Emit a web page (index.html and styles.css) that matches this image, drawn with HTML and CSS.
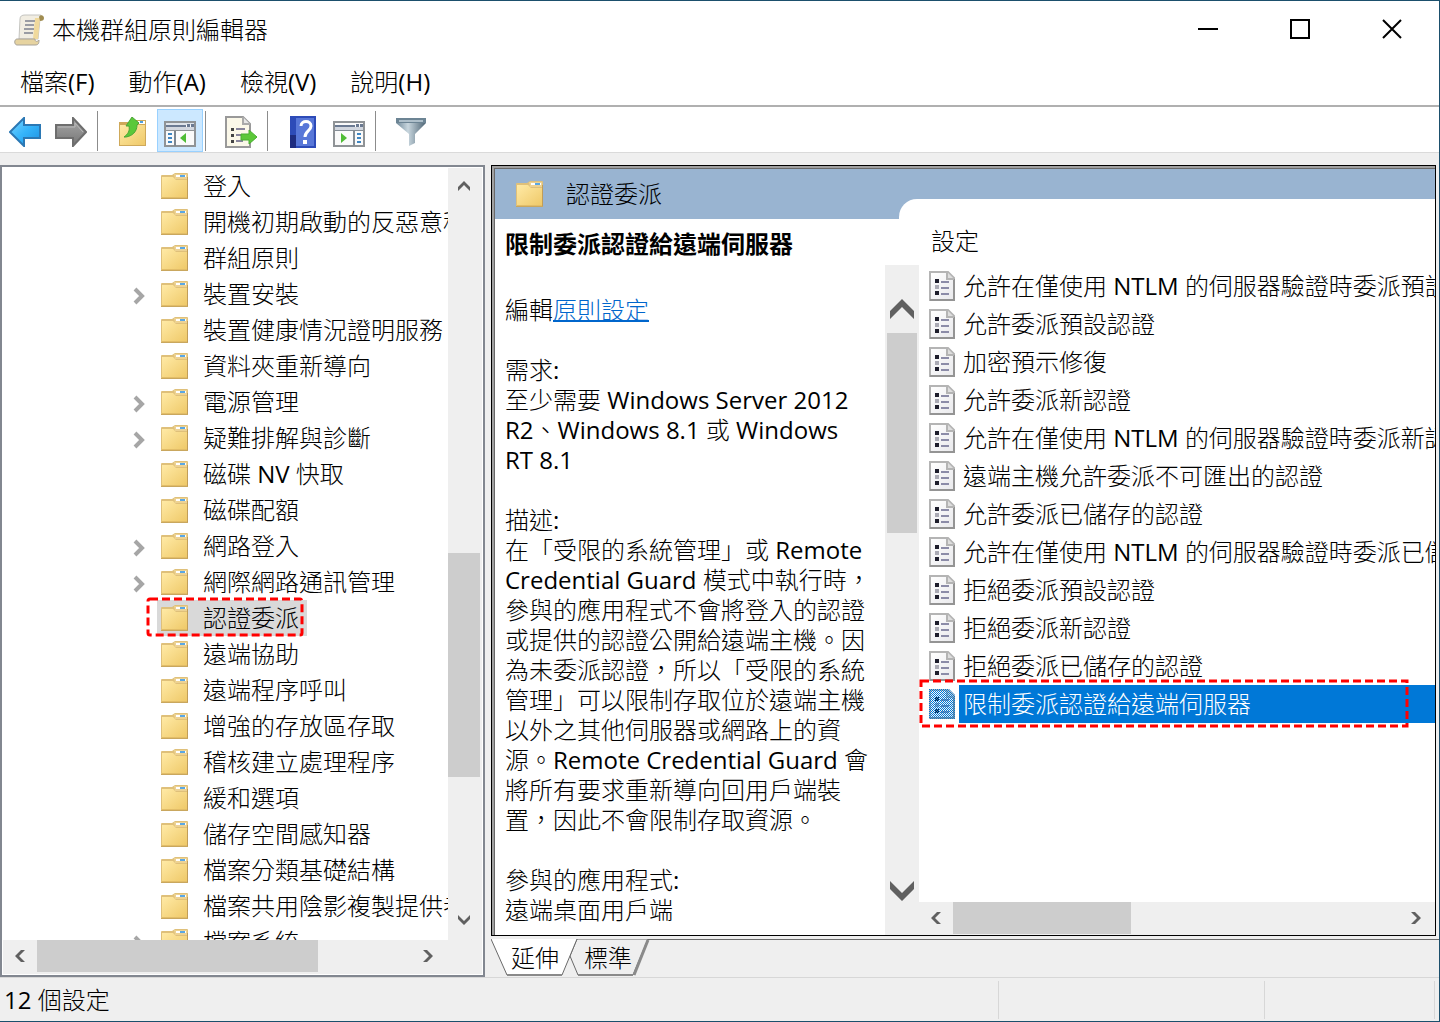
FILE: index.html
```html
<!DOCTYPE html>
<html lang="zh-Hant">

<head>
    <meta charset="UTF-8">
    <meta name="viewport" content="width=device-width, initial-scale=1.0">
    <title>本機群組原則編輯器</title>
    <link rel="stylesheet" href="styles.css">
</head>

<body>

    <!-- Shared icons -->
    <svg class="sprite" width="0" height="0" aria-hidden="true">
        <defs>
            <linearGradient id="gold" x1="0" y1="0" x2="1" y2="1">
                <stop offset="0" stop-color="#ffeaa6" />
                <stop offset="1" stop-color="#efc969" />
            </linearGradient>
            <linearGradient id="blue" x1="0" y1="0" x2="1" y2="1">
                <stop offset="0" stop-color="#7fd6ff" />
                <stop offset="0.5" stop-color="#35b4fa" />
                <stop offset="1" stop-color="#1c8fe0" />
            </linearGradient>
            <linearGradient id="gray" x1="0" y1="0" x2="0" y2="1">
                <stop offset="0" stop-color="#a9a9a9" />
                <stop offset="1" stop-color="#757575" />
            </linearGradient>
            <linearGradient id="steel" x1="0" y1="0" x2="1" y2="0">
                <stop offset="0" stop-color="#6e8798" />
                <stop offset="0.4" stop-color="#c8d6de" />
                <stop offset="1" stop-color="#4d6474" />
            </linearGradient>
            <linearGradient id="paper" x1="0" y1="0" x2="1" y2="1">
                <stop offset="0" stop-color="#ffffff" />
                <stop offset="1" stop-color="#e9e9ec" />
            </linearGradient>
            <pattern id="dither" width="2" height="2" patternUnits="userSpaceOnUse">
                <path d="M0 0h1v1H0zM1 1h1v1H1z" fill="#0078d7" />
            </pattern>
        </defs>
        <symbol id="folder" viewBox="0 0 30 28">
            <path d="M1 4q0-1 1-1h10l3-2h12q1 0 1 1v25H1z" fill="#dfc07a" />
            <path d="M14 2h13v5H15z" fill="#edd293" />
            <path d="M16 3h10v2H16z" fill="#fff" />
            <path d="M20 3h5v2h-5z" fill="#5aa7e4" />
            <path d="M2 5h11l3 3h11v17H2z" fill="url(#gold)" />
            <path d="M2 25h25v1H2z" fill="#e2bd68" />
            <path d="M1 26h27v1H1z" fill="#c9a75e" />
            <path d="M27 5h1v21h-1z" fill="#c19d58" />
        </symbol>
        <symbol id="policy" viewBox="0 0 26 30">
            <path d="M1 1h18l6 6v22H1z" fill="url(#paper)" stroke="#b4b4b4" stroke-width="2" />
            <path d="M25 8v21H1" fill="none" stroke="#949494" stroke-width="2" />
            <path d="M18 1v7h7" fill="#ddd" stroke="#b4b4b4" stroke-width="2" />
            <path d="M6 8h4v4H6zM6 20h4v4H6z" fill="#1d1d2b" />
            <path d="M6 14h4v4H6z" fill="#aaaab4" />
            <path d="M12 10h8v2h-8zM12 16h8v2h-8zM12 22h8v2h-8z" fill="#8c8ca8" />
        </symbol>
        <symbol id="arrow" viewBox="0 0 12 12">
            <path d="M0 7 6 1 12 7V11L6 5 0 11z" fill="#606060" />
        </symbol>
        <symbol id="expand" viewBox="0 0 12 18">
            <path d="M2 2 9 9 2 16" fill="none" stroke="#a6a6a6" stroke-width="4" />
        </symbol>
        <symbol id="pane" viewBox="0 0 32 26">
            <path d="M1 1h30v24H1z" fill="#fafafa" stroke="#8f9396" stroke-width="2" />
            <path d="M2 2h28v2H2z" fill="#dfe4ea" />
            <path d="M2 4h20v2H2z" fill="#6b7a92" />
            <path d="M2 6h28v3H2z" fill="#d2d7df" />
            <path d="M23 3h3v3h-3zM27 3h3v3h-3z" fill="#6b7a92" />
            <path d="M2 9h28v1H2z" fill="#8f9396" />
            <path d="M10 10h2v15h-2z" fill="#7d8791" />
            <path d="M4 12h4v2H4zM4 16h4v2H4zM4 20h4v2H4z" fill="#3f86c2" />
            <path d="M22 12v10l-6-5z" fill="#4fbc35" />
        </symbol>
    </svg>

    <div class="window">
        <header class="title-bar">
            <svg class="app-icon" viewBox="0 0 32 32" aria-hidden="true">
                <path d="M6 5c0-3 2-4 5-4h15c2 0 2 2 0 4l-2 20H5z" fill="#f1ede2" stroke="#c4c4c0" />
                <path d="M21 4h5l-2 21h-5z" fill="#f0d99c" />
                <path d="M25 3c1-3 5-2 5 1 0 2-1 3-4 3z" fill="#a08c50" />
                <path d="M11 7h10M11 11h9M10 15h10M10 19h9" stroke="#9a9ca4" stroke-width="2" />
                <path d="M3 25h18c0 3 2 3 4 1 0 4-1 5-4 5H3c-3 0-3-6 0-6z" fill="#e6d3a0" stroke="#a8a39a" />
            </svg>
            <h1 class="title">本機群組原則編輯器</h1>
            <div class="window-buttons">
                <button type="button" aria-label="最小化">
                    <svg width="20" height="20"><path d="M0 10h20" stroke="#000" stroke-width="2" /></svg>
                </button>
                <button type="button" aria-label="最大化">
                    <svg width="20" height="20"><path d="M1 1h18v18H1z" fill="none" stroke="#000" stroke-width="2" /></svg>
                </button>
                <button type="button" aria-label="關閉">
                    <svg width="20" height="20"><path d="M1 1 19 19M19 1 1 19" stroke="#000" stroke-width="2" /></svg>
                </button>
            </div>
        </header>

        <nav class="menu-bar">
            <button type="button">檔案<span class="en">(F)</span></button>
            <button type="button">動作<span class="en">(A)</span></button>
            <button type="button">檢視<span class="en">(V)</span></button>
            <button type="button">說明<span class="en">(H)</span></button>
        </nav>

        <div class="toolbar">
            <button type="button" aria-label="上一頁">
                <svg width="32" height="30" viewBox="0 0 32 30"><path d="M1 15 15 1v7h16v13H15v8z" fill="url(#blue)" stroke="#2b78b4" stroke-width="2" /></svg>
            </button>
            <button type="button" aria-label="下一頁">
                <svg width="32" height="30" viewBox="0 0 32 30"><path d="M31 15 18 1v7H1v13h17v8z" fill="url(#gray)" stroke="#6e6e6e" stroke-width="2" /><path d="M3 10h17V6l8 9" fill="none" stroke="#b9b9b9" /></svg>
            </button>
            <span class="separator"></span>
            <button type="button" aria-label="上一層">
                <svg width="28" height="30" viewBox="0 0 28 30">
                    <path d="M0 5h11l3-2h13v26H0z" fill="#cfa95a" />
                    <path d="M18 4h8v3h-8z" fill="#fff" />
                    <path d="M21 4h3v2h-3z" fill="#4d9fe0" />
                    <path d="M1 8h25v20H1z" fill="url(#gold)" />
                    <path d="M5 20c4-3 6-6 5-11H7l6-9 7 6-2 2c0 7-5 11-11 12z" fill="#5cc839" stroke="#4aa536" />
                </svg>
            </button>
            <button type="button" class="pressed" aria-label="顯示或隱藏主控台樹狀目錄" aria-pressed="true">
                <svg width="32" height="26"><use href="#pane" /></svg>
            </button>
            <span class="separator"></span>
            <button type="button" aria-label="匯出清單">
                <svg width="32" height="32" viewBox="0 0 32 32">
                    <path d="M1 1h17l7 7v23H1z" fill="#fbf8e9" stroke="#999" stroke-width="2" />
                    <path d="M18 1v7h7" fill="#e6e6e6" stroke="#aaa" stroke-width="2" />
                    <path d="M6 12h3v3H6zM6 18h3v3H6zM6 24h3v3H6z" fill="#444" />
                    <path d="M11 13h9M11 19h7M11 25h7" stroke="#88859c" stroke-width="2" />
                    <path d="M16 18h8v-4l8 7-8 7v-4h-8z" fill="#5cc839" stroke="#48ae31" />
                </svg>
            </button>
            <span class="separator"></span>
            <button type="button" aria-label="說明">
                <svg width="26" height="32" viewBox="0 0 26 32">
                    <path d="M0 0h26v32H0z" fill="#2d4bb8" />
                    <path d="M6 2h18v28H6z" fill="#5877d8" />
                    <path d="M0 19h6v13H0z" fill="#1e2c80" />
                    <path d="M11 10c0-6 10-6 10 0 0 5-6 5-6 11" fill="none" stroke="#fff" stroke-width="3" />
                    <path d="M13 24h4v4h-4z" fill="#fff" />
                </svg>
            </button>
            <button type="button" class="low" aria-label="顯示或隱藏動作窗格">
                <svg width="32" height="26" viewBox="0 0 32 26">
                    <path d="M1 1h30v24H1z" fill="#fafafa" stroke="#8f9396" stroke-width="2" />
                    <path d="M2 4h20v2H2zM23 3h3v3h-3zM27 3h3v3h-3z" fill="#6b7a92" />
                    <path d="M2 6h28v3H2z" fill="#d2d7df" />
                    <path d="M2 9h28v1H2zM20 10h2v15h-2z" fill="#848d95" />
                    <path d="M24 12h4v2h-4zM24 16h4v2h-4zM24 20h4v2h-4z" fill="#3f86c2" />
                    <path d="M8 12v10l6-5z" fill="#4fbc35" />
                </svg>
            </button>
            <span class="separator"></span>
            <button type="button" aria-label="篩選">
                <svg width="30" height="28" viewBox="0 0 30 28">
                    <path d="M0 1h30v4L19 16v9l-6 3V16L0 5z" fill="url(#steel)" />
                    <path d="M0 0h30v5H0z" fill="#6c8494" />
                    <path d="M3 3h24" stroke="#aebfca" stroke-width="2" />
                </svg>
            </button>
        </div>

        <main class="panes">
            <section class="tree-pane">
                <ul class="tree">
                    <li><svg class="folder"><use href="#folder" /></svg>登入</li>
                    <li><svg class="folder"><use href="#folder" /></svg>開機初期啟動的反惡意程式碼</li>
                    <li><svg class="folder"><use href="#folder" /></svg>群組原則</li>
                    <li><svg class="expand"><use href="#expand" /></svg><svg class="folder"><use href="#folder" /></svg>裝置安裝</li>
                    <li><svg class="folder"><use href="#folder" /></svg>裝置健康情況證明服務</li>
                    <li><svg class="folder"><use href="#folder" /></svg>資料夾重新導向</li>
                    <li><svg class="expand"><use href="#expand" /></svg><svg class="folder"><use href="#folder" /></svg>電源管理</li>
                    <li><svg class="expand"><use href="#expand" /></svg><svg class="folder"><use href="#folder" /></svg>疑難排解與診斷</li>
                    <li><svg class="folder"><use href="#folder" /></svg><span>磁碟<span class="en"> NV </span>快取</span></li>
                    <li><svg class="folder"><use href="#folder" /></svg>磁碟配額</li>
                    <li><svg class="expand"><use href="#expand" /></svg><svg class="folder"><use href="#folder" /></svg>網路登入</li>
                    <li><svg class="expand"><use href="#expand" /></svg><svg class="folder"><use href="#folder" /></svg>網際網路通訊管理</li>
                    <li>
                        <span class="tree-selected"><svg class="folder"><use href="#folder" /></svg>認證委派<svg class="marker tree-marker"><rect x="2" y="2" rx="2" /></svg></span>
                    </li>
                    <li><svg class="folder"><use href="#folder" /></svg>遠端協助</li>
                    <li><svg class="folder"><use href="#folder" /></svg>遠端程序呼叫</li>
                    <li><svg class="folder"><use href="#folder" /></svg>增強的存放區存取</li>
                    <li><svg class="folder"><use href="#folder" /></svg>稽核建立處理程序</li>
                    <li><svg class="folder"><use href="#folder" /></svg>緩和選項</li>
                    <li><svg class="folder"><use href="#folder" /></svg>儲存空間感知器</li>
                    <li><svg class="folder"><use href="#folder" /></svg>檔案分類基礎結構</li>
                    <li><svg class="folder"><use href="#folder" /></svg>檔案共用陰影複製提供者</li>
                    <li><svg class="expand"><use href="#expand" /></svg><svg class="folder"><use href="#folder" /></svg>檔案系統</li>
                </ul>
                <div class="scroll-v">
                    <button type="button" aria-label="向上捲動"><svg class="arrow"><use href="#arrow" /></svg></button>
                    <div class="track"><div class="thumb tree-thumb-v"></div></div>
                    <button type="button" aria-label="向下捲動"><svg class="arrow down"><use href="#arrow" /></svg></button>
                </div>
                <div class="scroll-h">
                    <button type="button" aria-label="向左捲動"><svg class="arrow left"><use href="#arrow" /></svg></button>
                    <div class="track"><div class="thumb tree-thumb-h"></div></div>
                    <button type="button" aria-label="向右捲動"><svg class="arrow right"><use href="#arrow" /></svg></button>
                </div>
                <div class="corner"></div>
            </section>

            <section class="result-pane">
                <div class="result-frame">
                    <div class="band">
                        <div class="band-title"><svg class="folder"><use href="#folder" /></svg>認證委派</div>
                        <div class="band-notch"></div>
                    </div>

                    <div class="result-body">
                        <article class="description">
                            <h2>限制委派認證給遠端伺服器</h2>
                            <p class="edit">編輯<a href="#">原則設定</a></p>
                            <p>需求<span class="en">:</span><br>至少需要<span class="en"> Windows Server 2012</span><br><span class="en">R2</span>、<span class="en">Windows 8.1 </span>或<span class="en"> Windows</span><br><span class="en">RT 8.1</span></p>
                            <p>描述<span class="en">:</span><br>在「受限的系統管理」或<span class="en"> Remote</span><br><span class="en">Credential Guard </span>模式中執行時，<br>參與的應用程式不會將登入的認證<br>或提供的認證公開給遠端主機。因<br>為未委派認證，所以「受限的系統<br>管理」可以限制存取位於遠端主機<br>以外之其他伺服器或網路上的資<br>源。<span class="en">Remote Credential Guard </span>會<br>將所有要求重新導向回用戶端裝<br>置，因此不會限制存取資源。</p>
                            <p>參與的應用程式<span class="en">:</span><br>遠端桌面用戶端</p>
                        </article>
                        <div class="scroll-v scroll-large">
                            <button type="button" aria-label="向上捲動"><svg class="arrow"><use href="#arrow" /></svg></button>
                            <div class="track"><div class="thumb text-thumb"></div></div>
                            <button type="button" aria-label="向下捲動"><svg class="arrow down"><use href="#arrow" /></svg></button>
                        </div>

                        <div class="settings">
                            <div class="settings-list">
                                <table>
                                    <thead>
                                        <tr><th>設定</th></tr>
                                    </thead>
                                    <tbody>
                                        <tr><td><svg class="policy"><use href="#policy" /></svg><span class="name">允許在僅使用<span class="en"> NTLM </span>的伺服器驗證時委派預設認證</span></td></tr>
                                        <tr><td><svg class="policy"><use href="#policy" /></svg><span class="name">允許委派預設認證</span></td></tr>
                                        <tr><td><svg class="policy"><use href="#policy" /></svg><span class="name">加密預示修復</span></td></tr>
                                        <tr><td><svg class="policy"><use href="#policy" /></svg><span class="name">允許委派新認證</span></td></tr>
                                        <tr><td><svg class="policy"><use href="#policy" /></svg><span class="name">允許在僅使用<span class="en"> NTLM </span>的伺服器驗證時委派新認證</span></td></tr>
                                        <tr><td><svg class="policy"><use href="#policy" /></svg><span class="name">遠端主機允許委派不可匯出的認證</span></td></tr>
                                        <tr><td><svg class="policy"><use href="#policy" /></svg><span class="name">允許委派已儲存的認證</span></td></tr>
                                        <tr><td><svg class="policy"><use href="#policy" /></svg><span class="name">允許在僅使用<span class="en"> NTLM </span>的伺服器驗證時委派已儲存的認證</span></td></tr>
                                        <tr><td><svg class="policy"><use href="#policy" /></svg><span class="name">拒絕委派預設認證</span></td></tr>
                                        <tr><td><svg class="policy"><use href="#policy" /></svg><span class="name">拒絕委派新認證</span></td></tr>
                                        <tr><td><svg class="policy"><use href="#policy" /></svg><span class="name">拒絕委派已儲存的認證</span></td></tr>
                                        <tr class="selected"><td><svg class="policy"><use href="#policy" /><path d="M0 0h20l6 6v24H0z" fill="url(#dither)" /></svg><span class="name">限制委派認證給遠端伺服器</span><svg class="marker list-marker"><rect x="2" y="2" /></svg></td></tr>
                                    </tbody>
                                </table>
                            </div>
                            <div class="scroll-h">
                                <button type="button" aria-label="向左捲動"><svg class="arrow left"><use href="#arrow" /></svg></button>
                                <div class="track"><div class="thumb list-thumb"></div></div>
                                <button type="button" aria-label="向右捲動"><svg class="arrow right"><use href="#arrow" /></svg></button>
                            </div>
                        </div>
                    </div>
                </div>

                <div class="tabs">
                    <svg class="tab-shapes" width="160" height="38" aria-hidden="true">
                        <path d="M79 17 87 36h55L157 0H86z" fill="#efefef" stroke="#696969" />
                        <path d="M143 36 157 1" stroke="#8a8a8a" stroke-width="3" />
                        <path d="M0 0 16 36h55L86 0z" fill="#fff" />
                        <path d="M0 0 16 36M71 36 86 0" fill="none" stroke="#696969" stroke-width="1" />
                        <path d="M16 36h55M87 36h55" stroke="#8a8a8a" stroke-width="2" />
                    </svg>
                    <button type="button">延伸</button>
                    <button type="button">標準</button>
                </div>
            </section>
        </main>

        <footer class="status-bar">
            <span class="status-text"><span class="en">12 </span>個設定</span>
            <span class="status-cell"></span>
            <span class="status-cell status-small"></span>
            <span class="status-end"></span>
        </footer>
    </div>

</body>

</html>
```

FILE: styles.css
```css
* {
    box-sizing: border-box;
}

body {
    margin: 0;
    font-family: "Open Sans", "Noto Sans CJK TC", sans-serif;
    font-size: 24px;
    font-weight: 300;
    line-height: 30px;
    color: #000;
}

/* Latin runs next to the thin Chinese text */
.en {
    font-weight: 400;
    line-height: 1;
    white-space: pre;
}

button {
    padding: 0;
    border: 0;
    background: none;
    font: inherit;
    color: inherit;
}

svg {
    display: block;
    flex: none;
}

.sprite {
    position: absolute;
}

.window {
    display: flex;
    flex-direction: column;
    height: 100vh;
    border: 1px solid #1b4f6c;
    border-left: 0;
    background: #efefef;
    overflow: hidden;
}

/* Title bar and menu */
.title-bar {
    display: flex;
    align-items: center;
    height: 58px;
    padding-left: 14px;
    background: #fff;
}

.app-icon {
    width: 32px;
    height: 32px;
}

.title {
    flex: 1;
    margin: 0 0 0 6px;
    font-size: 24px;
    font-weight: inherit;
}

.window-buttons {
    display: flex;
    align-self: flex-start;
    padding-right: 1px;
}

.window-buttons button {
    display: flex;
    align-items: center;
    justify-content: center;
    width: 92px;
    height: 56px;
}

.menu-bar {
    display: flex;
    height: 48px;
    padding-left: 3px;
    background: #fff;
    border-bottom: 2px solid #b0b0b0;
}

.menu-bar button {
    padding: 0 17px;
}

/* Toolbar */
.toolbar {
    display: flex;
    align-items: center;
    height: 46px;
    padding: 2px 0 0 2px;
    background: #fff;
    border-bottom: 1px solid #dadada;
}

.toolbar button {
    display: flex;
    align-items: center;
    justify-content: center;
    width: 46px;
    height: 43px;
    padding-top: 2px;
}

.toolbar .pressed {
    margin: 0 -1px 0 1px;
    padding-top: 7px;
    background: #cce8ff;
    border: 1px solid #99d1ff;
}

.toolbar .low {
    padding-top: 7px;
}

.separator {
    width: 1px;
    height: 40px;
    margin: 0 12px 0 3px;
    background: #8c8c8c;
}

.panes {
    display: flex;
    flex: 1;
    gap: 6px;
    min-height: 0;
    padding-top: 12px;
}

/* Console tree */
.tree-pane {
    display: grid;
    grid-template-columns: 1fr 34px;
    grid-template-rows: 1fr 34px;
    flex: 0 0 485px;
    padding: 1px;
    border: 2px solid #828790;
    background: #fff;
}

.tree {
    min-height: 0;
    margin: 0;
    padding: 0;
    list-style: none;
    overflow: hidden;
}

.tree li {
    display: flex;
    align-items: center;
    height: 36px;
    padding-left: 157px;
    white-space: nowrap;
}

.folder {
    width: 30px;
    height: 28px;
    margin-right: 13px;
}

.expand {
    width: 12px;
    height: 18px;
    margin: 4px 15px 0 -27px;
}

.tree-selected {
    position: relative;
    display: flex;
    align-items: center;
    height: 36px;
    margin-left: -3px;
    padding: 0 8px 0 3px;
    background: #d9d9d9;
}

/* Red dashed callouts */
.marker {
    position: absolute;
    overflow: visible;
}

.marker rect {
    width: calc(100% - 4px);
    height: calc(100% - 4px);
    fill: none;
    stroke: #f00;
    stroke-width: 3px;
    stroke-dasharray: 8 4;
}

.tree-marker {
    top: -3px;
    left: -11px;
    width: 158px;
    height: 40px;
}

.list-marker {
    top: -6px;
    left: 0;
    width: calc(100% - 26px);
    height: 49px;
}

/* Scroll bars */
.scroll-v,
.scroll-h {
    display: flex;
    background: #efefef;
}

.scroll-v {
    flex-direction: column;
    min-height: 0;
}

.scroll-v button,
.scroll-h button {
    display: flex;
    align-items: center;
    justify-content: center;
    flex: 0 0 34px;
}

.scroll-h button {
    height: 31px;
}

.tree-pane .scroll-v {
    padding: 1px 2px 3px 0;
}

.tree-pane .scroll-h {
    padding-right: 3px;
}

.track {
    flex: 1;
    min-height: 0;
}

.scroll-v .track {
    display: flex;
    flex-direction: column;
}

.thumb {
    background: #cdcdcd;
}

.tree-thumb-v {
    width: 32px;
    height: 32%;
    margin-top: 350px;
}

.tree-thumb-h {
    width: 75%;
    height: 32px;
}

.text-thumb {
    width: 30px;
    height: 200px;
    margin: 0 2px;
}

.list-thumb {
    width: 40%;
    height: 32px;
}

.arrow {
    width: 12px;
    height: 12px;
}

.down {
    transform: rotate(180deg);
}

.left {
    transform: rotate(-90deg);
}

.right {
    transform: rotate(90deg);
}

.corner {
    background: #efefef;
}

/* Result pane */
.result-pane {
    display: flex;
    flex-direction: column;
    flex: 1;
    min-width: 0;
}

.result-frame {
    display: flex;
    flex-direction: column;
    flex: 1;
    min-height: 0;
    margin-right: 3px;
    border: 1px solid #000;
    box-shadow: inset 2px 2px #a0a0a0, inset 3px 3px #696969;
    padding: 3px 0 0 3px;
    background: #fff;
}

.band {
    display: flex;
    height: 50px;
    background: #99b4d1;
}

.band-title {
    display: flex;
    align-items: center;
    width: 404px;
    padding-left: 20px;
}

.band-title .folder {
    margin-right: 21px;
}

.band-notch {
    flex: 1;
    align-self: flex-end;
    height: 20px;
    border-top-left-radius: 18px;
    background: #fff;
}

.result-body {
    display: grid;
    grid-template-columns: 390px 34px 1fr;
    grid-template-rows: 100%;
    flex: 1;
    min-height: 0;
}

.description {
    padding: 10px 0 0 10px;
    white-space: nowrap;
    overflow: hidden;
}

.description h2 {
    margin: 0 0 36px;
    font-size: 24px;
    font-weight: 700;
}

.description p {
    margin: 0 0 30px;
}

.description a {
    color: #0066cc;
    text-decoration-thickness: 2px;
}

.scroll-large {
    margin-top: 46px;
}

.scroll-large button {
    flex-basis: 68px;
    padding-top: 20px;
}

.scroll-large button:last-child {
    padding: 0 0 20px;
}

.scroll-large .arrow {
    width: 24px;
    height: 24px;
}

.settings {
    display: flex;
    flex-direction: column;
    min-width: 0;
    min-height: 0;
}

.settings-list {
    flex: 1;
    min-height: 0;
    overflow: hidden;
}

.settings-list table {
    width: 100%;
    border-collapse: collapse;
    table-layout: fixed;
}

.settings-list th {
    height: 48px;
    padding: 0 0 4px 12px;
    font-weight: inherit;
    text-align: left;
}

.settings-list td {
    position: relative;
    display: flex;
    align-items: center;
    height: 38px;
    padding: 0 0 0 10px;
    white-space: nowrap;
}

.name {
    flex: 1;
    min-width: 0;
    margin-left: 4px;
    padding-left: 4px;
    line-height: 38px;
}

.policy {
    width: 26px;
    height: 30px;
}

.selected .name {
    background: #0078d7;
    color: #fff;
}

.settings .scroll-h {
    height: 33px;
    padding-right: 2px;
}

/* Tabs under the result pane */
.tabs {
    position: relative;
    display: flex;
    height: 38px;
    margin-top: 3px;
    padding-left: 20px;
    gap: 25px;
    border-top: 1px solid #696969;
}

.tabs button {
    position: relative;
    height: 36px;
}

.tab-shapes {
    position: absolute;
    top: -1px;
    left: 0;
}

.status-bar {
    display: flex;
    height: 44px;
    padding: 3px 0 2px 4px;
    border-top: 1px solid #d7d7d7;
}

.status-text {
    flex: 1;
    line-height: 38px;
}

.status-cell {
    width: 266px;
    border-left: 1px solid #d7d7d7;
}

.status-small {
    width: 170px;
}

.status-end {
    width: 5px;
    border-left: 1px solid #d7d7d7;
}
```
